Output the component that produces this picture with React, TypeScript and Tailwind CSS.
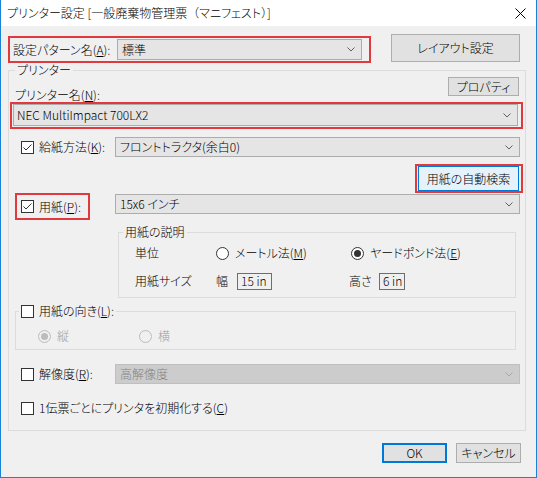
import React from "react";

const RED = "border-[#e0393e]";

function Chevron({ disabled }: { disabled?: boolean }) {
  return (
    <svg width="8" height="5" viewBox="0 0 8 5" className="shrink-0">
      <polyline
        points="0.5,0.5 4,4 7.5,0.5"
        fill="none"
        stroke={disabled ? "#a8a8a8" : "#606060"}
        strokeWidth="1"
      />
    </svg>
  );
}

function Checkbox({ checked }: { checked?: boolean }) {
  return (
    <span className="w-[13px] h-[13px] border border-[#333333] bg-white flex items-center justify-center shrink-0">
      {checked && (
        <svg width="11" height="11" viewBox="0 0 11 11">
          <polyline points="1.5,5.5 4,8 9.5,2.5" fill="none" stroke="#333333" strokeWidth="1" />
        </svg>
      )}
    </span>
  );
}

function Radio({ checked, disabled }: { checked?: boolean; disabled?: boolean }) {
  return (
    <span
      className={
        disabled
          ? "w-[13px] h-[13px] rounded-full border border-[#bcbcbc] bg-[#f0f0f0] flex items-center justify-center shrink-0"
          : "w-[13px] h-[13px] rounded-full border border-[#333333] bg-white flex items-center justify-center shrink-0"
      }
    >
      {checked && (
        <span
          className={
            disabled
              ? "w-[7px] h-[7px] rounded-full bg-[#bcbcbc]"
              : "w-[7px] h-[7px] rounded-full bg-[#333333]"
          }
        />
      )}
    </span>
  );
}

function U({ children }: { children: React.ReactNode }) {
  return <span className="underline underline-offset-[1px]">{children}</span>;
}

export default function App() {
  return (
    <div className="w-[537px] h-[478px] flex flex-col bg-[#f0f0f0] border-x border-b border-[#1883d7] text-[12px] leading-[14px] font-light text-black font-['Noto_Sans_CJK_JP',sans-serif] [font-feature-settings:'palt'] overflow-hidden">
      {/* Title bar */}
      <div className="h-[26px] bg-white flex items-center justify-between pl-[6px] pr-[10px] shrink-0">
        <span className="text-[12px]">
          プリンター設定 [一般廃棄物管理票<span className="[font-feature-settings:normal]">（</span>マニフェスト
          <span className="[font-feature-settings:normal]">）</span>]
        </span>
        <svg width="11" height="11" viewBox="0 0 11 11">
          <line x1="0.5" y1="0.5" x2="10.5" y2="10.5" stroke="#000" strokeWidth="1" />
          <line x1="10.5" y1="0.5" x2="0.5" y2="10.5" stroke="#000" strokeWidth="1" />
        </svg>
      </div>

      {/* Body */}
      <div className="flex flex-col pl-[7px] pt-[8px]">
        {/* Row 1 */}
        <div className="flex items-start h-[29px]">
          <div className={`mt-[2px] w-[363px] h-[27px] border-2 ${RED} flex items-center pl-[3px]`}>
            <span className="w-[104px]">
              設定パターン名(<U>A</U>):
            </span>
            <div className="w-[245px] h-[21px] border border-[#acacac] bg-[#e5e5e5] flex items-center justify-between pl-[4px] pr-[6px]">
              <span>標準</span>
              <Chevron />
            </div>
          </div>
          <button className="ml-[20px] w-[129px] h-[28px] border border-[#adadad] bg-[#e1e1e1] flex items-center justify-center">
            レイアウト設定
          </button>
        </div>

        {/* Printer group */}
        <fieldset className="w-[518px] border border-[#dcdcdc] pb-[12px]">
          <legend className="ml-[6px] px-[2px] leading-[14px]">プリンター</legend>

          <div className="flex justify-between h-[25px]">
            <span className="self-end pl-[6px] leading-[14px]">
              プリンター名(<U>N</U>):
            </span>
            <button className="self-start mr-[6px] w-[71px] h-[19px] border border-[#adadad] bg-[#e1e1e1] flex items-center justify-center">
              プロパティ
            </button>
          </div>

          <div className={`ml-[1px] w-[513px] h-[27px] border-2 ${RED} flex items-start pl-[1px]`}>
            <div className="w-[505px] h-[22px] border border-[#acacac] bg-[#e5e5e5] flex items-center justify-between pl-[3px] pr-[6px]">
              <span>NEC MultiImpact 700LX2</span>
              <Chevron />
            </div>
          </div>

          {/* 給紙方法 */}
          <div className="mt-[8px] flex items-center h-[20px]">
            <span className="ml-[12px]">
              <Checkbox checked />
            </span>
            <span className="ml-[5px] w-[76px]">
              給紙方法(<U>K</U>):
            </span>
            <div className="w-[405px] h-[20px] border border-[#acacac] bg-[#e5e5e5] flex items-center justify-between pl-[4px] pr-[6px]">
              <span>フロントトラクタ(余白0)</span>
              <Chevron />
            </div>
          </div>

          {/* 用紙の自動検索 */}
          <div className={`mt-[7px] ml-[406px] w-[108px] h-[29px] border-2 ${RED} flex items-start`}>
            <button className="ml-[1px] w-[101px] h-[25px] border border-[#0078d7] bg-[#e5f1fb] flex items-center justify-center">
              用紙の自動検索
            </button>
          </div>

          {/* 用紙 */}
          <div className="flex items-start">
            <div className={`ml-[6px] w-[75px] h-[27px] border-2 ${RED} flex items-center pl-[4px]`}>
              <Checkbox checked />
              <span className="ml-[5px]">
                用紙(<U>P</U>):
              </span>
            </div>
            <div className="ml-[25px] mt-[1px] w-[405px] h-[20px] border border-[#acacac] bg-[#e5e5e5] flex items-center justify-between pl-[4px] pr-[6px]">
              <span>15x6 インチ</span>
              <Chevron />
            </div>
          </div>

          {/* 用紙の説明 */}
          <fieldset className="mt-[5px] ml-[109px] w-[398px] border border-[#dcdcdc] pb-[6px]">
            <legend className="ml-[4px] px-[2px] leading-[14px]">用紙の説明</legend>
            <div className="mt-[4px] flex items-center h-[20px] pl-[16px]">
              <span className="w-[81px]">単位</span>
              <span className="w-[135px] flex items-center">
                <Radio />
                <span className="ml-[6px]">
                  メートル法(<U>M</U>)
                </span>
              </span>
              <span className="flex items-center">
                <Radio checked />
                <span className="ml-[6px]">
                  ヤードポンド法(<U>E</U>)
                </span>
              </span>
            </div>
            <div className="mt-[8px] flex items-center h-[20px] pl-[16px]">
              <span className="w-[81px]">用紙サイズ</span>
              <span className="w-[21px]">幅</span>
              <span className="w-[35px] h-[17px] border border-[#6e6e6e] flex items-center pl-[3px]">15 in</span>
              <span className="ml-[77px] w-[30px]">高さ</span>
              <span className="w-[26px] h-[17px] border border-[#6e6e6e] flex items-center pl-[3px]">6 in</span>
            </div>
          </fieldset>

          {/* 用紙の向き */}
          <fieldset className="mt-[6px] ml-[6px] w-[501px] border border-[#dcdcdc] pb-[3px]">
            <legend className="ml-[3px] px-[2px] leading-[14px] flex items-center">
              <Checkbox />
              <span className="ml-[5px]">
                用紙の向き(<U>L</U>):
              </span>
            </legend>
            <div className="mt-[8px] flex items-center h-[20px] pl-[22px] text-[#a0a0a0]">
              <span className="w-[101px] flex items-center">
                <Radio checked disabled />
                <span className="ml-[6px]">縦</span>
              </span>
              <span className="flex items-center">
                <Radio disabled />
                <span className="ml-[6px]">横</span>
              </span>
            </div>
          </fieldset>

          {/* 解像度 */}
          <div className="mt-[14px] flex items-center h-[20px]">
            <span className="ml-[12px]">
              <Checkbox />
            </span>
            <span className="ml-[5px] w-[76px]">
              解像度(<U>R</U>):
            </span>
            <div className="w-[405px] h-[20px] border border-[#bfbfbf] bg-[#cccccc] flex items-center justify-between pl-[4px] pr-[6px] text-[#838383]">
              <span>高解像度</span>
              <Chevron disabled />
            </div>
          </div>

          {/* 1伝票 */}
          <div className="mt-[14px] flex items-center h-[20px]">
            <span className="ml-[12px]">
              <Checkbox />
            </span>
            <span className="ml-[5px]">
              1伝票ごとにプリンタを初期化する(<U>C</U>)
            </span>
          </div>
        </fieldset>

        {/* Buttons */}
        <div className="mt-[12px] w-[518px] flex justify-end gap-[9px] pr-[5px]">
          <button className="w-[65px] h-[20px] border-2 border-[#0078d7] bg-[#e1e1e1] flex items-center justify-center">
            OK
          </button>
          <button className="w-[65px] h-[20px] border border-[#adadad] bg-[#e1e1e1] flex items-center justify-center">
            キャンセル
          </button>
        </div>
      </div>
    </div>
  );
}
